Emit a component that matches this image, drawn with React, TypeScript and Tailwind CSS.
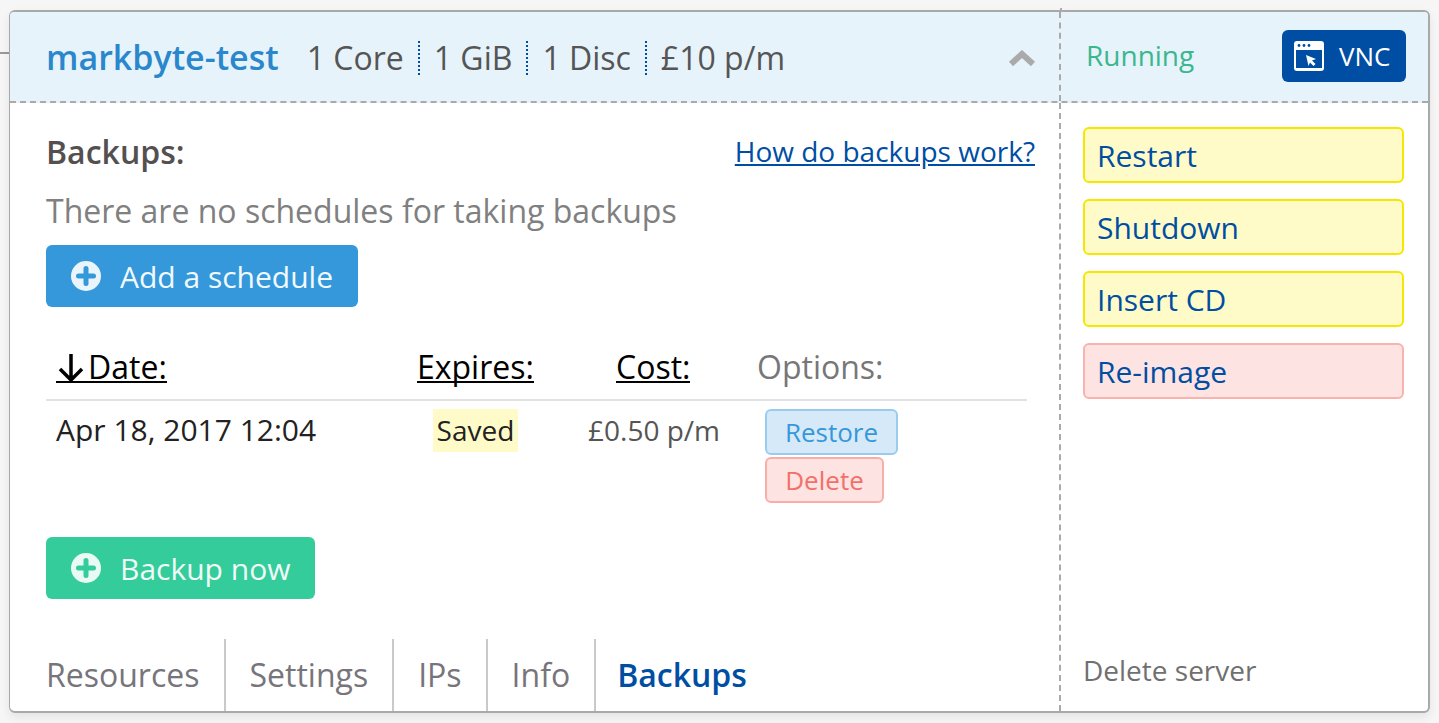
const PlusCircle = ({ fg, bg }: { fg: string; bg: string }) => (
  <svg width="30" height="30" viewBox="0 0 30 30" className="shrink-0">
    <circle cx="15" cy="15" r="15" fill={fg} />
    <path d="M15 7.5v15M7.5 15h15" stroke={bg} strokeWidth="5" strokeLinecap="round" />
  </svg>
);

const Sep = () => <span className="mx-[14px] h-[34px] border-l-2 border-dotted border-[#004ea3]" />;

const Action = ({ label, red }: { label: string; red?: boolean }) => (
  <div
    className={`h-[56px] rounded-[6px] border-2 pl-[12px] flex items-center text-[30px] text-[#004ea3] ${
      red ? "border-[#f9b3ad] bg-[#fde3e1]" : "border-[#f7e600] bg-[#fefbc8]"
    }`}
  >
    {label}
  </div>
);

const Tab = ({ label, active, last }: { label: string; active?: boolean; last?: boolean }) => (
  <div
    className={`flex h-[72px] items-center px-[24px] first:pl-[36px] first:pr-[25px] nth-[2]:pl-[23px] last:pl-[21px] text-[32px] leading-none ${
      last ? "" : "border-r-2 border-[#c9c9c9]"
    } ${active ? "font-semibold text-[#004ea3]" : "text-[#77757b]"}`}
  >
    {label}
  </div>
);

export default function App() {
  return (
    <div
      className="relative h-[723px] w-[1439px] overflow-hidden bg-[#f6f6f6] pl-[9px] pt-[10px] text-[32px] text-[#555]"
      style={{ fontFamily: '"Open Sans", sans-serif' }}
    >
      <div className="absolute left-0 top-[52px] h-[2px] w-[9px] bg-[#999]" />
      <div className="relative flex h-[703px] w-[1421px] flex-col overflow-visible rounded-[6px] border-x border-t-2 border-b-2 border-r-2 border-[#a9a9a9] bg-white shadow-[0_4px_10px_rgba(0,0,0,0.08)]">
        <div className="absolute left-[1050px] top-[-4px] h-[4px] border-l-2 border-dashed border-[#aaa]" />
        {/* header */}
        <div className="flex h-[91px] shrink-0 rounded-t-[4px] border-b-2 border-dashed border-[#aaa] bg-[#e7f3fa]">
          <div className="flex w-[1051px] items-center pl-[36px] pr-[24px] pt-[2px] border-r-2 border-dashed border-[#aaa]">
            <span className="text-[34px] font-semibold text-[#2a87cc]">markbyte-test</span>
            <span className="ml-[28px]">1 Core</span>
            <Sep />
            <span>1 GiB</span>
            <Sep />
            <span>1 Disc</span>
            <Sep />
            <span>£10 p/m</span>
            <svg width="26" height="16" viewBox="0 0 26 16" className="ml-auto">
              <path d="M2 14 13 4l11 10" fill="none" stroke="#aaa" strokeWidth="6" />
            </svg>
          </div>
          <div className="flex flex-1 items-center justify-between pl-[25px] pr-[22px]">
            <span className="text-[#3bb78f] mb-[4px] text-[28px]">Running</span>
            <div className="flex h-[52px] w-[124px] items-center gap-[14px] rounded-[6px] bg-[#004ea3] pl-[11px] text-[26px] text-white mb-[2px]">
              <svg width="32" height="30" viewBox="0 0 32 30" className="shrink-0">
                <rect x="1" y="0" width="30" height="30" rx="3" fill="white" />
                <rect x="3" y="9" width="26" height="18" fill="#004ea3" />
                <circle cx="6" cy="4.5" r="1.4" fill="#004ea3" />
                <circle cx="11" cy="4.5" r="1.4" fill="#004ea3" />
                <circle cx="16" cy="4.5" r="1.4" fill="#004ea3" />
                <path d="M13 14l10 4-4 1.5 3.5 3.5-2 2-3.5-3.5-1.5 3.5z" fill="white" />
              </svg>
              <span className="pt-[2px]">VNC</span>
            </div>
          </div>
        </div>

        <div className="flex min-h-0 flex-1">
          {/* main */}
          <div className="flex w-[1051px] flex-col border-r-2 border-dashed border-[#aaa]">
            <div className="flex-1 pl-[36px] pr-[24px] pt-[27px]">
              <div className="flex items-start justify-between">
                <span className="text-[32px] font-semibold leading-[44px] text-[#555050]">Backups:</span>
                <a className="text-[28px] leading-[42px] text-[#004ea3] underline">How do backups work?</a>
              </div>
              <div className="mt-[16px] text-[32px] leading-[42px] text-[#808080]">There are no schedules for taking backups</div>
              <div className="mt-[13px] flex h-[62px] w-[312px] items-center gap-[19px] rounded-[6px] bg-[#3498db] pl-[25px] text-[30px] text-[#f2f9fd]">
                <PlusCircle fg="#eaf5fb" bg="#3498db" />
                Add a schedule
              </div>

              <div className="mt-[39px] w-[981px]">
                <div className="flex h-[55px] items-start border-b-2 border-[#e2e2e2] pt-[4px] text-[32px] leading-[34px] text-black">
                  <span className="ml-[10px] w-[361px]">
                    <span className="box-content flex h-[31px] w-fit items-start border-b-2 border-black">
                      <svg width="28" height="31" viewBox="0 0 28 31" className="shrink-0">
                        <path d="M15 4v26M4 19l11 11 11-11" fill="none" stroke="black" strokeWidth="3.5" />
                      </svg>
                      <span className="ml-[4px]">Date:</span>
                    </span>
                  </span>
                  <span className="w-[199px]"><span className="box-content block h-[31px] w-fit border-b-2 border-black">Expires:</span></span>
                  <span className="w-[141px]"><span className="box-content block h-[31px] w-fit border-b-2 border-black">Cost:</span></span>
                  <span className="text-[#777]">Options:</span>
                </div>
                <div className="flex items-start pt-[8px]">
                  <span className="ml-[10px] w-[377px] text-[30px] leading-[42px] text-[#222]">Apr 18, 2017 12:04</span>
                  <span className="flex h-[43px] w-[85px] items-center justify-center bg-[#fefbc8] text-[28px] leading-[38px] pb-[2px] text-[#222]">Saved</span>
                  <span className="ml-[70px] w-[177px] text-[28px] leading-[42px] text-[#555]">£0.50 p/m</span>
                  <div className="flex flex-col items-start gap-[2px]">
                    <div className="flex h-[46px] w-[133px] items-center justify-center rounded-[6px] border-2 border-[#9accef] bg-[#d6e9f8] text-[26px] text-[#3498db]">Restore</div>
                    <div className="flex h-[46px] w-[119px] items-center justify-center rounded-[6px] border-2 border-[#f8aea8] bg-[#fde3e1] text-[26px] text-[#f1716a]">Delete</div>
                  </div>
                </div>
              </div>

              <div className="mt-[34px] flex h-[62px] w-[269px] items-center gap-[19px] rounded-[6px] bg-[#34cc9b] pl-[25px] text-[30px] text-[#f0fbf7]">
                <PlusCircle fg="#e9f9f4" bg="#34cc9b" />
                Backup now
              </div>
            </div>
            <div className="flex">
              <Tab label="Resources" />
              <Tab label="Settings" />
              <Tab label="IPs" />
              <Tab label="Info" />
              <Tab label="Backups" active last />
            </div>
          </div>

          {/* side */}
          <div className="flex flex-1 flex-col pl-[22px] pr-[24px] pt-[24px]">
            <div className="flex flex-col gap-[16px]">
              <Action label="Restart" />
              <Action label="Shutdown" />
              <Action label="Insert CD" />
              <Action label="Re-image" red />
            </div>
            <div className="mt-auto mb-[21px] text-[28px] leading-[40px] text-[#707070]">Delete server</div>
          </div>
        </div>
      </div>
    </div>
  );
}
